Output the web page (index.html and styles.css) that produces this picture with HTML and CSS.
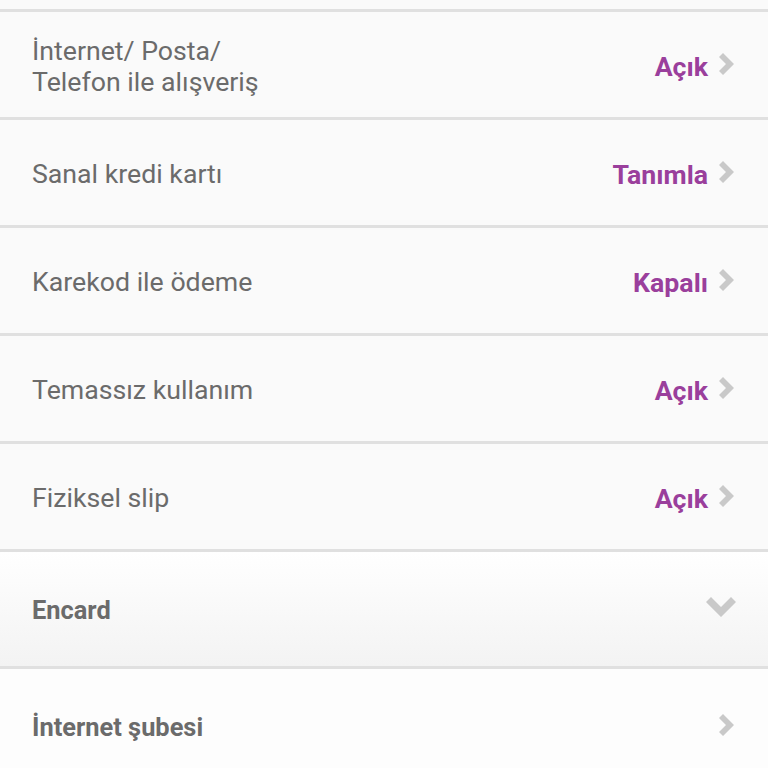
FILE: index.html
```html
<!DOCTYPE html>
<html lang="tr">
  <head>
    <meta charset="UTF-8" />
    <meta name="viewport" content="width=device-width, initial-scale=1.0" />
    <title>Kart Ayarları</title>
    <link rel="stylesheet" href="styles.css">
  </head>
  <body>
    <div class="settings">
      <div class="row">
        <span class="label">İnternet/ Posta/<br />Telefon ile alışveriş</span>
        <span class="value">Açık</span>
        <svg class="chev" width="18" height="22" viewBox="0 0 18 22"><polygon points="1,4 5,0 16,11 5,22 1,18 8,11" /></svg>
      </div>
      <div class="row">
        <span class="label">Sanal kredi kartı</span>
        <span class="value">Tanımla</span>
        <svg class="chev" width="18" height="22" viewBox="0 0 18 22"><polygon points="1,4 5,0 16,11 5,22 1,18 8,11" /></svg>
      </div>
      <div class="row">
        <span class="label">Karekod ile ödeme</span>
        <span class="value">Kapalı</span>
        <svg class="chev" width="18" height="22" viewBox="0 0 18 22"><polygon points="1,4 5,0 16,11 5,22 1,18 8,11" /></svg>
      </div>
      <div class="row">
        <span class="label">Temassız kullanım</span>
        <span class="value">Açık</span>
        <svg class="chev" width="18" height="22" viewBox="0 0 18 22"><polygon points="1,4 5,0 16,11 5,22 1,18 8,11" /></svg>
      </div>
      <div class="row">
        <span class="label">Fiziksel slip</span>
        <span class="value">Açık</span>
        <svg class="chev" width="18" height="22" viewBox="0 0 18 22"><polygon points="1,4 5,0 16,11 5,22 1,18 8,11" /></svg>
      </div>

      <div class="section">
        <span class="title">Encard</span>
        <svg class="chev down" width="30" height="22" viewBox="0 0 30 22"><polygon points="0,5 5,0 15,10 25,0 30,5 15,20" /></svg>
      </div>
      <div class="section plain">
        <span class="title">İnternet şubesi</span>
        <svg class="chev" width="18" height="22" viewBox="0 0 18 22"><polygon points="1,4 5,0 16,11 5,22 1,18 8,11" /></svg>
      </div>
    </div>
  </body>
</html>
```

FILE: styles.css
```css
body {
  margin: 0;
  background-color: #fafafa;
  font-family: Roboto, "Liberation Sans", sans-serif;
}
.settings {
  padding-top: 9px;
}
.row,
.section {
  display: flex;
  align-items: center;
  height: 105px;
  padding: 0 32px;
  border-top: 3px solid #e0e0e0;
}
.label {
  flex: 1;
  font-size: 26.7px;
  line-height: 31px;
  color: #6b6b6b;
  padding-top: 4px;
}
.value {
  font-size: 26.7px;
  font-weight: bold;
  color: #9a3f9c;
  margin-right: 10px;
  padding-top: 4px;
}
.chev {
  margin-top: -2px;
}
.chev polygon {
  fill: #c9c9c9;
}
.section {
  height: 114px;
  background: linear-gradient(#ffffff, #f3f3f3);
}
.section.plain {
  background: #fdfdfd;
}
.title {
  flex: 1;
  font-size: 25.4px;
  font-weight: bold;
  color: #6b6b6b;
  padding-top: 2px;
}
.chev.down {
  margin-right: 0;
}
```
